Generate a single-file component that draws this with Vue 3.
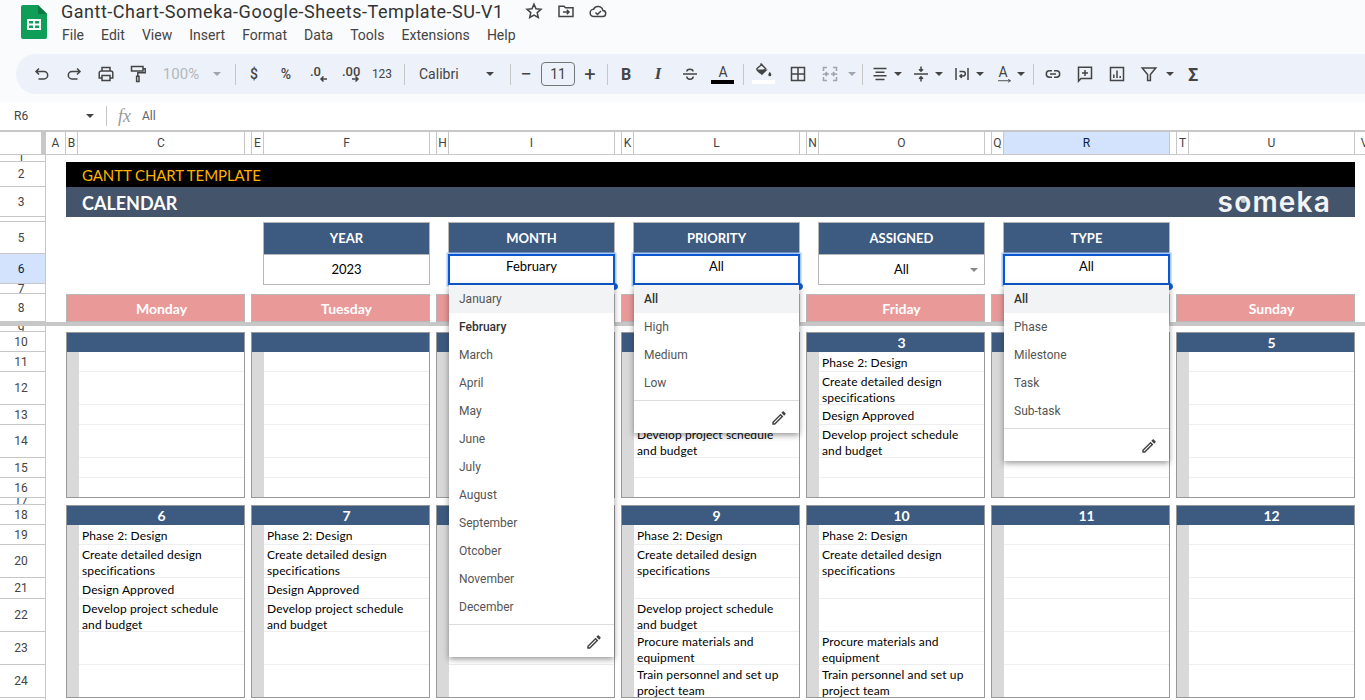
<script setup>
const menu = ['File', 'Edit', 'View', 'Insert', 'Format', 'Data', 'Tools', 'Extensions', 'Help']

const icons = {
  undo: 'M6 3.5 3 6.5l3 3M3.5 6.5H11a3.7 3.7 0 0 1 0 7.4H5.5',
  redo: 'M12 3.5l3 3-3 3M14.5 6.5H7a3.7 3.7 0 0 0 0 7.4h5.5',
  print: 'M5 6V2.5h8V6M5 13H2.2V8a2 2 0 0 1 2-2h9.6a2 2 0 0 1 2 2v5H13M5 10.5h8v5H5z',
  paint: 'M2.5 1.5h11.5v4.5H2.5zM14 3.8h2.2v4H8.8v3.4M7.6 11.2h2.4v5.3H7.6z',
  strike: 'M2 9h14M5.8 6.5C5.8 3.5 12 3.5 12 6.5M5.8 11.5c0 3.5 6.4 3.5 6.4 0',
  borders: 'M2.5 2.5h13v13h-13zM9 2.5v13M2.5 9h13',
  merge: 'M2.5 6V2.5H6M2.5 8.5v1.5M2.5 12v3.5H6M15.5 6V2.5H12M15.5 8.5v1.5M15.5 12v3.5H12M8 9H4M6 7 4 9l2 2M10 9h4M12 7l2 2-2 2',
  align: 'M2.5 3.5h13M4.5 7.2h9M2.5 10.8h13M4.5 14.5h9',
  valign: 'M2 9h14M9 1.5v4.6M7 4.3l2 2 2-2M9 16.5v-4.6M7 13.7l2-2 2 2',
  wrap: 'M3 3v12M15 3v12M6.5 6.5H10a2.3 2.3 0 0 1 0 4.6H7M8.8 9.3 7 11.1l1.8 1.8',
  link: 'M8 5.8H5.5a3.2 3.2 0 0 0 0 6.4H8M10 5.8h2.5a3.2 3.2 0 0 1 0 6.4H10M6 9h6',
  comment: 'M2.5 2.2h13v11.3H5l-2.5 2.7zM9 5v6M6 8h6',
  chart: 'M2.5 2.5h13v13h-13zM5.8 13V9.5M9 13V5.5M12.2 13v-2',
  filter: 'M2.2 3h13.6L10.4 9.6V15.5H7.6V9.6z',
  arrowL: 'M16 6H4M9 1 4 6l5 5',
  star: 'M9 2.2l2 4.6 5 .5-3.8 3.3 1.1 4.9L9 13l-4.3 2.5 1.1-4.9L2 7.3l5-.5z',
  folder: 'M2 4.2h5l1.5 1.6h7.5v8.7H2zM6 10h6M9.8 7.8 12 10l-2.2 2.2',
  cloud: 'M5 14.5a3.6 3.6 0 0 1-.5-7.2 5 5 0 0 1 9.4 1.2A3 3 0 0 1 13.5 14.5zM6.5 10.5l2 2 3.5-3.5',
  fill: 'M5.5 1.5 10.5 6.5 6.8 10.6a1.4 1.4 0 0 1-2 0L2.3 8.2a1.4 1.4 0 0 1 0-2L7.4 2'
}

// Toolbar strip, left to right. w is the slot width in pixels.
const toolbar = [
  { icon: 'undo', w: 32 }, { icon: 'redo', w: 32 }, { icon: 'print', w: 32 }, { icon: 'paint', w: 32 },
  { text: '100%', w: 54, cls: 'zoomlevel' }, { caret: 1, w: 18, off: 1 }, { w: 9 }, { sep: 1 }, { w: 2 },
  { text: '$', w: 32, cls: 'fmt' }, { text: '%', w: 32, cls: 'fmt' },
  { dec: '.0', w: 32 }, { dec: '.00', w: 32, right: 1 }, { text: '123', w: 32, cls: 'small' }, { w: 6 }, { sep: 1 },
  { text: 'Calibri', w: 79, cls: 'fontname' }, { caret: 1, w: 12 }, { w: 14 }, { sep: 1 },
  { text: '−', w: 30, cls: 'step' }, { size: '11', w: 34 }, { text: '+', w: 30, cls: 'step' }, { w: 2 }, { sep: 1 }, { w: 2 },
  { text: 'B', w: 32, cls: 'bold' }, { text: 'I', w: 32, cls: 'ital' }, { icon: 'strike', w: 32 },
  { color: 1, w: 34 }, { w: 3 }, { sep: 1 }, { w: 4 },
  { fill: 1, w: 32 }, { w: 2 }, { icon: 'borders', w: 32 }, { icon: 'merge', w: 32, off: 1 }, { caret: 1, w: 12, off: 1 }, { w: 4 }, { sep: 1 }, { w: 3 },
  { icon: 'align', w: 28 }, { caret: 1, w: 8 }, { w: 5 },
  { icon: 'valign', w: 28 }, { caret: 1, w: 8 }, { w: 5 },
  { icon: 'wrap', w: 28 }, { caret: 1, w: 8 }, { w: 5 },
  { rot: 1, w: 28 }, { caret: 1, w: 8 }, { w: 8 }, { sep: 1 }, { w: 3 },
  { icon: 'link', w: 32 }, { icon: 'comment', w: 32 }, { icon: 'chart', w: 32 }, { icon: 'filter', w: 32 },
  { caret: 1, w: 10 }, { w: 2 }, { text: 'Σ', w: 32, cls: 'sigma' }
]

const columns = [
  ['A', 20], ['B', 12], ['C', 167], ['', 7], ['E', 12], ['F', 166], ['', 7], ['H', 12], ['I', 166],
  ['', 7], ['K', 12], ['L', 166], ['', 7], ['N', 12], ['O', 166], ['', 7], ['Q', 12], ['R', 166, true],
  ['', 7], ['T', 12], ['U', 166], ['V', 20]
]

const frozenRows = [
  ['1', 7], ['2', 25], ['3', 30], ['', 5], ['5', 32], ['6', 30, true], ['7', 10], ['8', 28]
]
const scrollRows = [
  ['9', 6], ['10', 20], ['11', 20], ['12', 33], ['13', 20], ['14', 33], ['15', 20], ['16', 20], ['17', 7],
  ['18', 20], ['19', 20], ['20', 33], ['21', 21], ['22', 33], ['23', 33], ['24', 33], ['25', 20]
]

const months = ['January', 'February', 'March', 'April', 'May', 'June', 'July', 'August', 'September', 'Otcober', 'November', 'December']
const filters = [
  { label: 'YEAR', value: '2023' },
  { label: 'MONTH', value: 'February', options: months, chosen: 'February' },
  { label: 'PRIORITY', value: 'All', options: ['All', 'High', 'Medium', 'Low'], chosen: 'All' },
  { label: 'ASSIGNED', value: 'All', caret: true },
  { label: 'TYPE', value: 'All', options: ['All', 'Phase', 'Milestone', 'Task', 'Sub-task'], chosen: 'All' }
]

const days = ['Monday', 'Tuesday', 'Wednesday', 'Thursday', 'Friday', 'Saturday', 'Sunday']

const P = 'Phase 2: Design'
const C = 'Create detailed design\nspecifications'
const D = 'Design Approved'
const V = 'Develop project schedule\nand budget'
const R = 'Procure materials and\nequipment'
const T = 'Train personnel and set up\nproject team'
const week1 = [P, C, D, V]
const weeks = [
  {
    heights: [20, 33, 20, 33, 20, 19],
    cards: [
      { n: '', rows: [] }, { n: '', rows: [] }, { n: '1', rows: week1 }, { n: '2', rows: week1 },
      { n: '3', rows: week1 }, { n: '4', rows: [] }, { n: '5', rows: [] }
    ]
  },
  {
    heights: [20, 33, 21, 33, 33, 32],
    cards: [
      { n: '6', rows: week1 }, { n: '7', rows: week1 }, { n: '8', rows: week1 },
      { n: '9', rows: [P, C, '', V, R, T] }, { n: '10', rows: [P, C, '', '', R, T] },
      { n: '11', rows: [] }, { n: '12', rows: [] }
    ]
  }
]

const isTwoLine = (text) => Boolean(text) && text.includes('\n')
</script>

<template>
  <div class="app">
    <header class="top">
      <svg class="logo" viewBox="0 0 26 34" width="26" height="34">
        <path class="lg-body" d="M2 0h15l9 9v23a2 2 0 0 1-2 2H2a2 2 0 0 1-2-2V2a2 2 0 0 1 2-2z" />
        <path class="lg-fold" d="M17 0l9 9h-9z" />
        <path class="lg-grid" d="M6 14h14v11H6zM8 16v2.500h4V16zm6 0v2.500h4V16zM8 20.500V23h4v-2.500zm6 0V23h4v-2.500z" fill-rule="evenodd" />
      </svg>
      <div class="titles">
        <div class="doc">
          <span class="docname">Gantt-Chart-Someka-Google-Sheets-Template-SU-V1</span>
          <svg class="docicon" viewBox="0 0 18 18" width="18" height="18"><path :d="icons.star" /></svg>
          <svg class="docicon" viewBox="0 0 18 18" width="18" height="18"><path :d="icons.folder" /></svg>
          <svg class="docicon" viewBox="0 0 18 18" width="18" height="18"><path :d="icons.cloud" /></svg>
        </div>
        <nav class="menu"><span v-for="m in menu" :key="m">{{ m }}</span></nav>
      </div>
    </header>

    <div class="toolwrap">
      <div class="toolbar">
        <template v-for="(t, i) in toolbar" :key="i">
          <i v-if="t.sep" class="sep"></i>
          <span v-else class="slot" :class="[t.cls, { off: t.off }]" :style="{ width: t.w + 'px' }">
            <svg v-if="t.icon" viewBox="0 0 18 18" width="18" height="18"><path :d="icons[t.icon]" /></svg>
            <template v-else-if="t.text">{{ t.text }}</template>
            <i v-else-if="t.caret" class="caret"></i>
            <span v-else-if="t.dec" class="dec">
              <b>{{ t.dec }}</b>
              <svg viewBox="0 0 18 12" width="9" height="6" :class="{ flip: t.right }"><path :d="icons.arrowL" /></svg>
            </span>
            <span v-else-if="t.size" class="sizebox">{{ t.size }}</span>
            <span v-else-if="t.color" class="colorA">A<i class="bar black"></i></span>
            <span v-else-if="t.fill" class="fillicon">
              <svg viewBox="0 0 18 18" width="18" height="18">
                <path class="solid" d="M2.400 7.600h10.400l-6 5.600z" />
                <path :d="icons.fill" />
                <path class="solid" d="M14.800 9.800c1 1.400 1.500 2.200 1.500 3a1.500 1.500 0 0 1-3 0c0-.8.500-1.600 1.500-3z" />
              </svg>
              <i class="bar white"></i>
            </span>
            <span v-else-if="t.rot" class="rotA">A
              <svg viewBox="0 0 18 6" width="14" height="5"><path d="M0 2h16M13 0l3 2-3 2" /></svg>
            </span>
          </span>
        </template>
      </div>
    </div>

    <div class="formula">
      <span class="namebox">R6</span>
      <i class="caret"></i>
      <i class="fsep"></i>
      <span class="fx">fx</span>
      <span class="fval">All</span>
    </div>

    <div class="colheads">
      <div class="corner"></div>
      <div v-for="(c, i) in columns" :key="i" class="col" :class="{ active: c[2] }" :style="{ width: c[1] + 'px' }">{{ c[0] }}</div>
    </div>

    <section class="pane frozen">
      <div class="rowheads">
        <div v-for="r in frozenRows" :key="r[0]" class="rh" :class="{ active: r[2] }" :style="{ height: r[1] + 'px' }">{{ r[0] }}</div>
      </div>
      <div class="content">
        <div class="banner">GANTT CHART TEMPLATE</div>
        <div class="subbanner">
          <span>CALENDAR</span>
          <span class="brand">s<span class="brando">o<i></i></span>meka</span>
        </div>
        <div class="filters grid7">
          <div v-for="f in filters" :key="f.label" class="filter">
            <div class="fhead">{{ f.label }}</div>
            <div class="fvalue" :class="{ open: f.options }">
              {{ f.value }}
              <i v-if="f.caret" class="caret gray"></i>
              <i v-if="f.options" class="handle"></i>
              <div v-if="f.options" class="dropdown">
                <div class="opts">
                  <div
                    v-for="(o, i) in f.options"
                    :key="o"
                    class="opt"
                    :class="{ hover: i === 0, chosen: o === f.chosen }"
                  >{{ o }}</div>
                </div>
                <div class="ddfoot">
                  <svg viewBox="0 0 24 24" width="18" height="18">
                    <path class="solid" d="M3 17.250V21h3.750L17.810 9.940l-3.750-3.750L3 17.250zM5.920 19H5v-.92l9.060-9.060.92.92L5.920 19zM20.710 7.040c.39-.39.39-1.020 0-1.410l-2.340-2.340c-.2-.2-.45-.29-.71-.29s-.51.1-.7.29l-1.830 1.830 3.750 3.750 1.830-1.830z" />
                  </svg>
                </div>
              </div>
            </div>
          </div>
        </div>
        <div class="weekdays grid7">
          <div v-for="d in days" :key="d" class="weekday">{{ d }}</div>
        </div>
      </div>
    </section>

    <div class="freeze"></div>

    <section class="pane">
      <div class="rowheads">
        <div v-for="r in scrollRows" :key="r[0]" class="rh" :style="{ height: r[1] + 'px' }">{{ r[0] }}</div>
      </div>
      <div class="content weeks">
        <div v-for="(w, wi) in weeks" :key="wi" class="grid7">
          <article v-for="(c, ci) in w.cards" :key="ci" class="card">
            <div class="cardhead">{{ c.n }}</div>
            <div class="cardbody">
              <div
                v-for="(h, hi) in w.heights"
                :key="hi"
                class="entry"
                :class="{ two: isTwoLine(c.rows[hi]) }"
                :style="{ height: h + 'px' }"
              >{{ c.rows[hi] }}</div>
            </div>
          </article>
        </div>
      </div>
    </section>
  </div>
</template>

<style>
html, body { margin: 0; background: #fff; overflow: hidden; }
</style>

<style scoped>
.app { width: 1365px; height: 700px; overflow: hidden; font-family: Roboto, sans-serif; color: #444; background: #fff; }
svg path { fill: none; stroke: #444; stroke-width: 1.5; }
svg path.solid { fill: #444; stroke: none; }
.lg-body { fill: #0f9d58; stroke: none; }
.lg-fold { fill: #0b7a43; stroke: none; }
.lg-grid { fill: #fff; stroke: none; }

.top { height: 54px; box-sizing: border-box; background: #f9fbfd; display: flex; padding: 5px 0 0 21px; }
.logo { display: block; flex: none; }
.titles { margin-left: 14px; margin-top: -5px; }
.doc { display: flex; align-items: center; height: 22px; }
.docname { font-size: 18px; color: #333; letter-spacing: .52px; width: 464px; white-space: nowrap; }
.docicon { margin-right: 14px; }
.menu { display: flex; gap: 17.1px; margin: 3px 0 0 1px; font-size: 14px; line-height: 20px; color: #444; }

.toolwrap { height: 48px; background: #f9fbfd; box-sizing: border-box; }
.toolbar { margin-left: 16px; height: 40px; background: #edf2fa; border-radius: 20px 0 0 20px; display: flex; align-items: center; padding-left: 10px; }
.slot { flex: none; display: flex; align-items: center; justify-content: center; height: 40px; font-size: 14px; color: #444; }
.slot.off { opacity: .45; }
.sep { flex: none; width: 1px; height: 21px; background: #c7c7c7; }
.caret { display: inline-block; width: 0; height: 0; border: 4px solid transparent; border-top-color: #444; border-bottom: 0; }
.caret.gray { border-top-color: #888; }
.zoomlevel { color: #b4b7bb; font-size: 15px; }
.fmt { font-size: 14px; font-weight: 500; }
.small { font-size: 12px; }
.fontname { justify-content: flex-start; padding-left: 14px; box-sizing: border-box; }
.step { font-size: 20px; font-weight: 400; }
.sizebox { display: block; width: 34px; height: 24px; line-height: 22px; box-sizing: border-box; text-align: center; border: 1px solid #747775; border-radius: 4px; font-size: 14px; }
.bold { font-weight: 700; font-size: 16px; }
.ital { font-style: italic; font-weight: 700; font-size: 17px; font-family: "Liberation Serif", serif; }
.sigma { font-weight: 700; font-size: 18px; }
.dec { position: relative; display: block; width: 24px; height: 24px; }
.dec b { font-size: 13px; font-weight: 500; line-height: 19px; display: block; padding-left: 4px; }
.dec svg { position: absolute; left: 13px; bottom: 4px; }
.dec svg path { stroke-width: 3; }
.dec svg.flip { transform: scaleX(-1); }
.colorA { position: relative; display: block; width: 24px; height: 30px; margin-bottom: 10px; text-align: center; font-size: 14px; line-height: 36px; }
.colorA .bar { left: 0; }
.bar { position: absolute; bottom: 0; height: 4px; width: 23px; }
.bar.black { background: #000; }
.bar.white { background: #fff; }
.fillicon { position: relative; display: block; width: 24px; height: 30px; margin-bottom: 10px; }
.fillicon svg { position: absolute; left: 3px; top: 8px; }
.fillicon .bar { left: 0; bottom: 0; }
.rotA { display: flex; flex-direction: column; align-items: center; font-size: 14px; line-height: 14px; }
.rotA svg { display: block; margin-left: 3px; }
.rotA svg path { stroke-width: 1.2; }

.formula { height: 28px; display: flex; align-items: center; font-size: 12px; color: #444; position: relative; }
.namebox { width: 72px; padding-left: 14px; color: #444; }
.fsep { width: 1px; height: 20px; background: #c7c7c7; margin-left: 12px; }
.fx { font-family: "Liberation Serif", serif; font-style: italic; font-size: 18px; color: #9a9a9a; margin-left: 11px; width: 24px; }
.fval { color: #5f6368; }

.colheads { display: flex; height: 25px; box-sizing: border-box; border-top: 2px solid #c7c7c7; border-bottom: 1px solid #c7c7c7; overflow: hidden; }
.corner { width: 41px; flex: none; border-right: 5px solid #c7c7c7; }
.col { flex: none; box-sizing: border-box; border-right: 1px solid #c7c7c7; font-size: 12px; line-height: 22px; text-align: center; overflow: hidden; color: #444; }
.col.active { background: #d3e3fd; color: #041e49; }

.pane { display: flex; }
.frozen { position: relative; z-index: 3; height: 167px; }
.rowheads { flex: none; width: 46px; }
.rh { box-sizing: border-box; border-right: 1px solid #c7c7c7; border-bottom: 1px solid #c7c7c7; font-size: 12px; display: flex; align-items: center; justify-content: center; overflow: hidden; padding-right: 3px; color: #444; }
.rh.active { background: #d3e3fd; color: #041e49; }

.content { padding: 7px 0 0 20px; width: 1289px; flex: none; }
.banner { height: 25px; background: #000; color: #ffb300; font: 15px/26px Lato, sans-serif; letter-spacing: -.1px; padding-left: 16px; }
.subbanner { height: 30px; background: #44546a; color: #fff; font: 700 18px/32px Lato, sans-serif; padding: 0 24px 0 16px; display: flex; justify-content: space-between; }
.brand { font: 600 28px/30px Inter, sans-serif; letter-spacing: 1.2px; color: #f2f4f6; }
.brando { position: relative; }
.brando i { position: absolute; left: 7px; top: 13px; width: 5px; height: 5px; border-radius: 50%; background: #c4cad3; }

.grid7 { display: grid; grid-template-columns: repeat(7, 179px); column-gap: 6px; }
.filters { margin-top: 5px; height: 63px; position: relative; z-index: 4; }
.filter { width: 167px; justify-self: end; }
.filter:first-child { grid-column-start: 2; }
.fhead { height: 32px; box-sizing: border-box; border: 1px solid #b7b7b7; border-bottom: 0; background: #3d5a80; color: #fff; font: 700 13px/31px Lato, sans-serif; text-align: center; }
.fvalue { position: relative; height: 31px; box-sizing: border-box; border: 1px solid #b7b7b7; color: #000; font: 13px/28px Lato, sans-serif; text-align: center; }
.fvalue .caret { position: absolute; right: 6px; top: 13px; }
.fvalue.open { border: 2px solid #0b57d0; line-height: 21px; box-shadow: 0 0 0 1.5px #a8c7fa; background: #fff; }
.handle { position: absolute; right: -5px; bottom: -7px; width: 5px; height: 5px; border: 1px solid #0b57d0; border-radius: 50%; background: #0b57d0; }

.dropdown { position: absolute; left: -1px; right: -1px; top: 29px; background: #fff; text-align: left; box-shadow: 0 2px 6px rgba(40, 40, 40, .5); font-family: Roboto, sans-serif; }
.opt { height: 28px; line-height: 28px; padding-left: 10px; font-size: 12px; color: #555; }
.opt.hover { background: #f1f3f4; }
.opt.chosen { color: #333; font-weight: 500; }
.ddfoot { height: 33px; margin-top: 3px; box-sizing: border-box; border-top: 1px solid #dadce0; display: flex; align-items: center; justify-content: flex-end; padding: 2px 11px 0 0; }

.weekdays { margin-top: 9px; }
.weekday { height: 28px; box-sizing: border-box; border: 1px solid #b7b7b7; padding-left: 12px; background: #ea9999; color: #fff; font: 700 14px/27px Lato, sans-serif; text-align: center; }

.freeze { height: 4px; background: #c7c7c7; position: relative; z-index: 1; }

.weeks { padding-top: 6px; display: flex; flex-direction: column; row-gap: 7px; }
.card { box-sizing: border-box; border: 1px solid #999; }
.cardhead { height: 19px; padding-left: 12px; background: #3d5a80; color: #fff; font: 700 14px/20px Lato, sans-serif; text-align: center; }
.cardbody { border-left: 12px solid #d9d9d9; }
.entry { box-sizing: border-box; border-bottom: 1px solid #eee; padding: 0 0 0 3px; display: flex; align-items: flex-end; white-space: pre-line; color: #000; font: 12px/16px Lato, sans-serif; letter-spacing: .12px; overflow: hidden; }
.entry.two { align-items: flex-start; padding-top: 2px; }
.entry:last-child { border-bottom: 0; }
</style>
